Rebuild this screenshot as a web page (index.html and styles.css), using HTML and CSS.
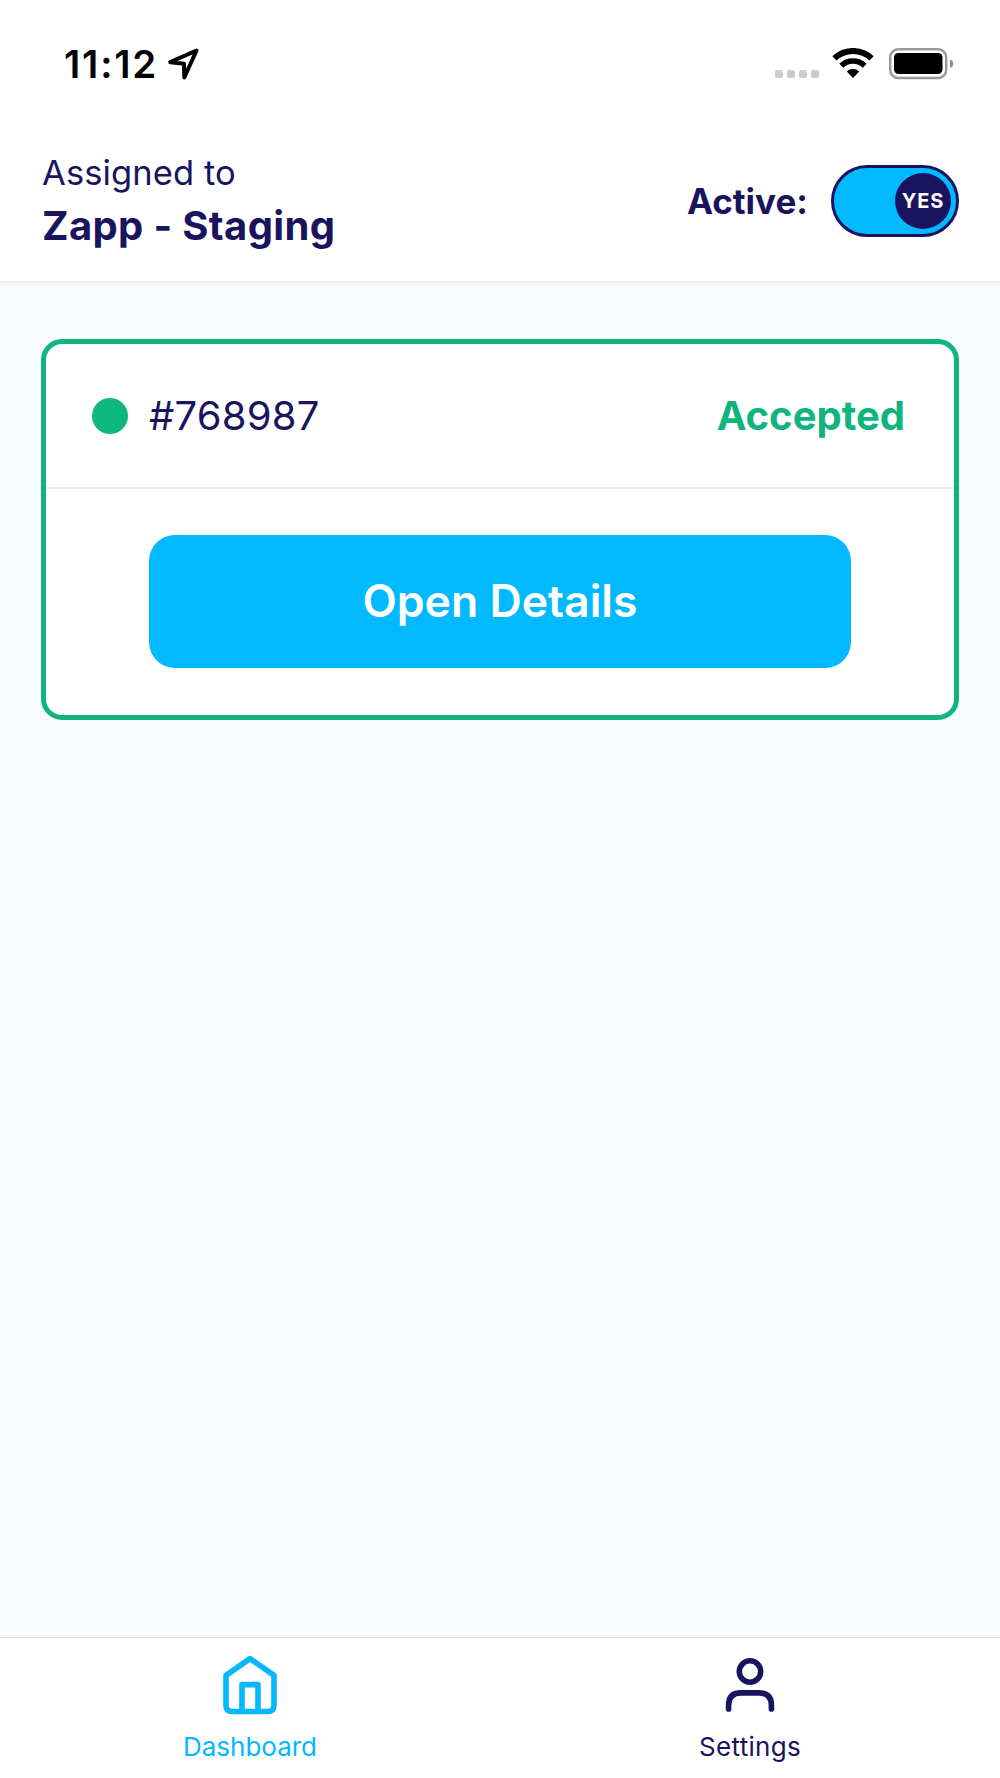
FILE: index.html
```html
<!DOCTYPE html>
<html lang="en">
<head>
<meta charset="utf-8">
<title>Dashboard</title>
<link rel="stylesheet" href="styles.css">
</head>
<body>
<div class="app">
  <div class="status-bar">
    <div class="status-left">
      <span class="time">11:12</span>
      <svg class="location" width="34" height="34" viewBox="0 0 34 34"><path d="M29.5 3.5 3.2 15.2 17 16.8 17.3 30.5Z" fill="none" stroke="#000" stroke-width="4" stroke-linejoin="round"/></svg>
    </div>
    <div class="status-right">
      <svg class="signal" width="44" height="8" viewBox="0 0 44 8" fill="#cbcbcb"><rect width="8" height="8" rx="2.5"/><rect x="12" width="8" height="8" rx="2.5"/><rect x="24" width="8" height="8" rx="2.5"/><rect x="36" width="8" height="8" rx="2.5"/></svg>
      <svg class="wifi" width="42" height="32" viewBox="0 0 42 32"><path d="M2.4 10.4A27 27 0 0 1 39.6 10.4" fill="none" stroke="#000" stroke-width="6"/><path d="M9.3 17.7A17 17 0 0 1 32.7 17.7" fill="none" stroke="#000" stroke-width="5.6"/><path d="M21 30 14.8 23.5A9 9 0 0 1 27.2 23.5Z"/></svg>
      <svg class="battery" width="65" height="32" viewBox="0 0 65 32"><rect x="1.2" y="1.2" width="56" height="28.8" rx="8" fill="none" stroke="#999" stroke-width="2.4"/><rect x="5" y="5" width="48.5" height="21" rx="4.5"/><path d="M61 11.5Q64.3 12.5 64.3 15.7T61 20Z" fill="#8d8d8d"/></svg>
    </div>
  </div>
  <header class="header">
    <div class="assignment">
      <div class="assigned-label">Assigned to</div>
      <div class="store">Zapp - Staging</div>
    </div>
    <div class="active">
      <span class="active-label">Active:</span>
      <div class="toggle"><div class="thumb"><span class="thumb-text">YES</span></div></div>
    </div>
  </header>
  <main class="content">
    <section class="card">
      <div class="card-head">
        <span class="dot"></span>
        <span class="order">#768987</span>
        <span class="state">Accepted</span>
      </div>
      <div class="card-body"><button class="open">Open Details</button></div>
    </section>
  </main>
  <nav class="tabs">
    <a class="tab tab-current">
      <svg width="64" height="64" viewBox="0 0 64 64" fill="none" stroke="currentColor" stroke-width="5.6" stroke-linejoin="round"><path d="M32 6.6 8 23.4V53.2Q8 59.5 14.3 59.5H49.7Q56 59.5 56 53.2V23.4Z"/><path d="M24 59.2V32.6H40V59.2"/></svg>
      <span class="tab-label">Dashboard</span>
    </a>
    <a class="tab">
      <svg width="64" height="64" viewBox="0 0 64 64" fill="none" stroke="currentColor" stroke-width="5.6" stroke-linecap="round"><circle cx="32" cy="19.5" r="10.7"/><path d="M10.6 56.9V53.2Q10.6 40.9 23 40.9H41Q53.4 40.9 53.4 53.2V56.9"/></svg>
      <span class="tab-label settings">Settings</span>
    </a>
  </nav>
</div>
</body>
</html>
```
FILE: styles.css
```css
* { box-sizing: border-box; }
body { margin: 0; font-family: Inter, "Liberation Sans", sans-serif; color: #1a145f; background: #fff; }
svg { display: block; flex: none; }
.app { width: 1000px; height: 1778px; display: flex; flex-direction: column; white-space: nowrap; overflow: hidden; }
.status-bar { height: 129px; display: flex; justify-content: space-between; align-items: flex-start; padding: 0 46px 0 64px; color: #000; }
.status-left { display: flex; padding-top: 40px; gap: 11px; }
.time { font-size: 38.5px; line-height: 48px; font-weight: 600; letter-spacing: 1.8px; width: 92px; }
.location { margin-top: 7px; }
.status-right { display: flex; align-items: flex-end; padding-top: 47.5px; }
.signal { margin-bottom: 2px; }
.wifi { margin-left: 13px; }
.battery { margin-left: 15px; }
.header { height: 154px; display: flex; justify-content: space-between; padding: 21px 41px 0 42px; border-bottom: 2px solid #ececed; }
.assigned-label { font-size: 34.5px; line-height: 46px; letter-spacing: 0.1px; }
.store { font-size: 40px; line-height: 50px; font-weight: 700; margin-top: 5px; letter-spacing: 0.35px; }
.active { display: flex; gap: 23px; padding-top: 15px; align-items: flex-start; }
.active-label { font-size: 35px; line-height: 72px; font-weight: 700; }
.toggle { width: 128px; height: 72px; border: 3px solid #1a145f; border-radius: 36px; background: #00b9ff; display: flex; justify-content: flex-end; align-items: center; padding-right: 5px; }
.thumb { width: 56px; height: 56px; border-radius: 50%; background: #1a145f; color: #fff; display: flex; align-items: center; justify-content: center; }
.thumb-text { font-size: 20px; font-weight: 700; letter-spacing: 0.8px; }
.content { flex: 1; background: #f7fbfe; padding: 56px 41px; }
.card { height: 381px; border: 5px solid #0fb57d; border-radius: 21px; background: #fff; }
.card-head { height: 145px; border-bottom: 2px solid #ebebeb; display: flex; align-items: center; padding: 0 49px 0 46px; }
.dot { width: 36px; height: 36px; border-radius: 50%; background: #0fb87c; margin-right: 21px; }
.order { font-size: 40px; letter-spacing: 0.2px; }
.state { margin-left: auto; font-size: 40px; font-weight: 700; color: #0fb57d; }
.card-body { padding: 46px 103px 0; }
.open { display: block; width: 702px; height: 133px; border: 0; border-radius: 26px; background: #00b9ff; color: #fff; font: 600 44.6px/133px Inter, "Liberation Sans", sans-serif; padding: 0; }
.tabs { height: 141px; border-top: 1px solid #dfe1e2; display: flex; background: #fff; }
.tab { flex: 1; display: flex; flex-direction: column; align-items: center; padding-top: 14px; }
.tab-current { color: #05b8fd; }
.tab-label { font-size: 26px; line-height: 32px; margin-top: 15px; }
.settings { letter-spacing: 0.3px; }
```
